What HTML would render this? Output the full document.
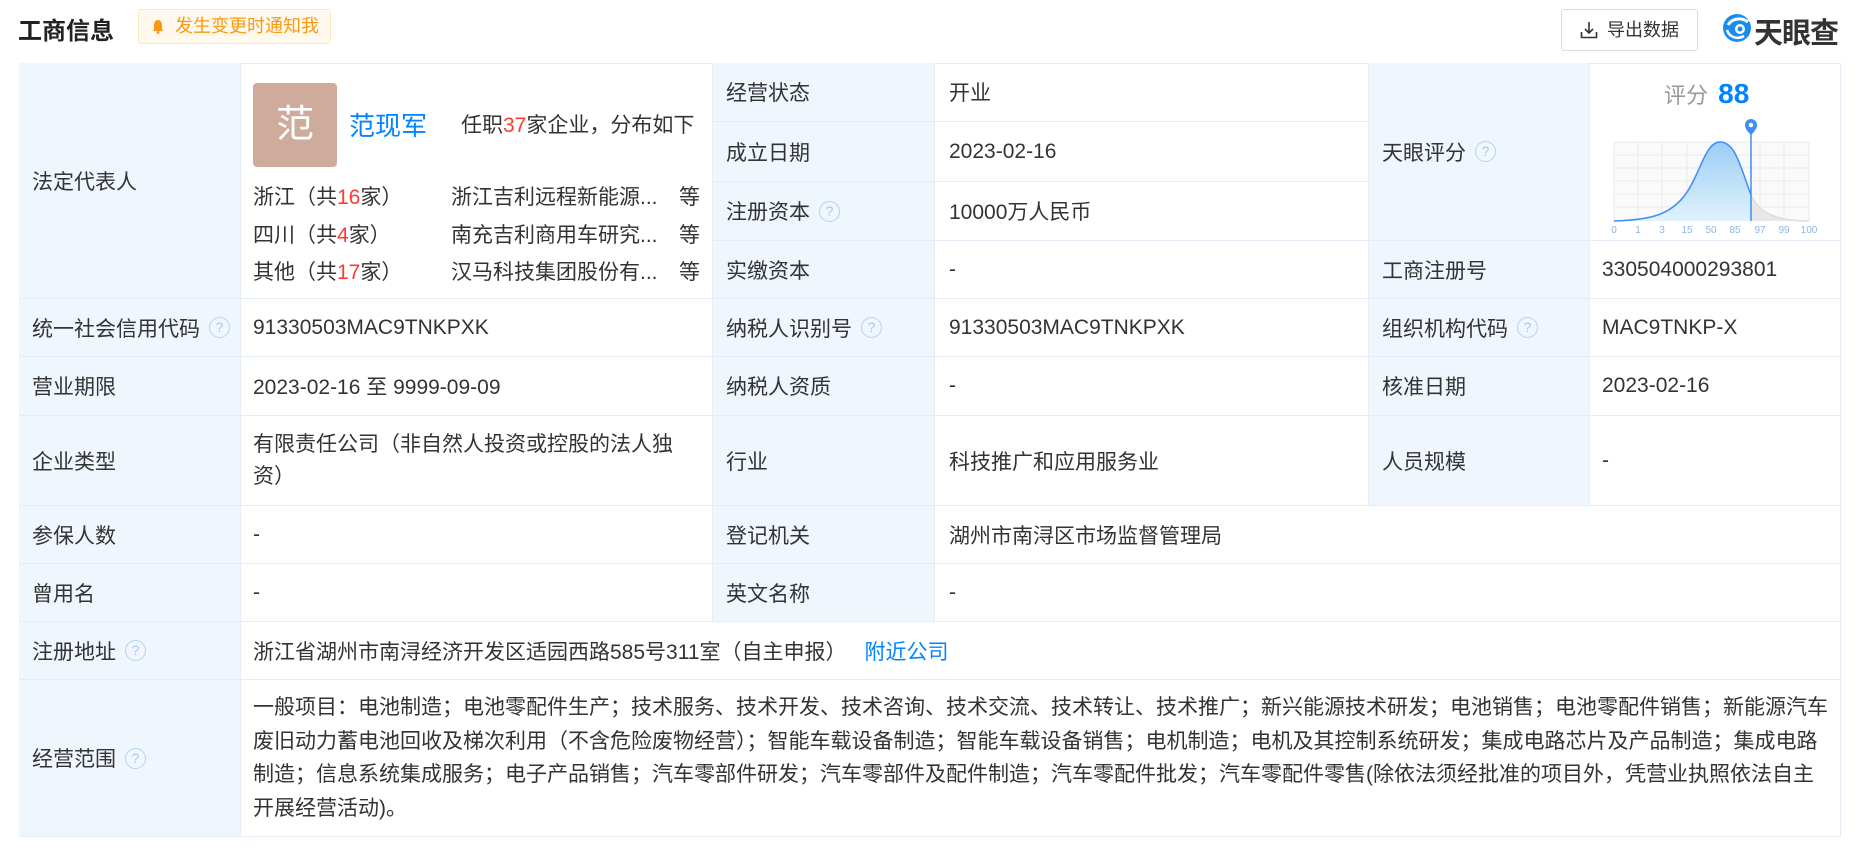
<!DOCTYPE html>
<html><head><meta charset="utf-8">
<style>
*{margin:0;padding:0;box-sizing:border-box}
body{width:1863px;height:847px;background:#fff;font-family:"Liberation Sans","Noto Sans CJK SC",sans-serif;color:#333;font-size:21px;position:relative;overflow:hidden}
.a{position:absolute;white-space:nowrap}
.c{position:absolute;display:flex;align-items:center;padding-left:13px;border-right:1px solid #e4ecf5;border-bottom:1px solid #e4ecf5}
.l{background:#eff6fd}
.q{display:inline-block;width:21px;height:21px;border:1.5px solid #b5d3ef;border-radius:50%;color:#a8c9ea;font-size:14px;line-height:18px;text-align:center;margin-left:9px}
.red{color:#ff3b30}
.blue{color:#0084ff}
</style></head><body>
<div class="a" style="left:18px;top:11px;font-size:24px;font-weight:bold;color:#222">工商信息</div>
<div class="a" style="left:138px;top:9px;width:193px;height:35px;background:#fff8ec;border:1px solid #fde7c4;border-radius:3px;color:#fa9a14;font-size:18px;line-height:33px;padding-left:36px">发生变更时通知我
<svg class="a" style="left:13px;top:9px" width="12" height="15" viewBox="0 0 12 15"><path d="M6 1C3 1 2 4 2 6v4L1 12h10l-1-2V6c0-2-1-5-4-5z" fill="#fa9a14"/><circle cx="6" cy="13.5" r="1.5" fill="#fa9a14"/></svg></div>
<div class="a" style="left:1561px;top:9px;width:137px;height:42px;border:1px solid #dcdcdc;border-radius:3px;font-size:18px;line-height:40px;padding-left:45px;color:#333">导出数据
<svg class="a" style="left:18px;top:11px" width="18" height="18" viewBox="0 0 18 18" fill="none" stroke="#333" stroke-width="1.6"><path d="M9 1v11M5 8l4 4 4-4M1.5 11v5.5h15V11"/></svg></div>
<svg class="a" style="left:1722px;top:13px" width="30" height="30" viewBox="0 0 30 30"><circle cx="15" cy="15" r="14" fill="#1a8cf0"/><path d="M26 9C20 4 10 5 6 12" stroke="#fff" stroke-width="3" fill="none"/><path d="M5 17c2 7 10 10 17 6" stroke="#fff" stroke-width="2.5" fill="none"/><circle cx="18" cy="16" r="5" fill="#fff"/><circle cx="18" cy="16" r="2.5" fill="#1a8cf0"/></svg>
<div class="a" style="left:1754px;top:10px;font-size:29px;font-weight:bold;color:#333;letter-spacing:-1px">天眼查</div>

<div class="a" style="left:19px;top:63px;width:1822px;height:774px;border:1px solid #e4ecf5;border-right:none;border-bottom:none"></div>
<!-- row1 -->
<div class="c l" style="left:19px;top:63px;width:222px;height:236px">法定代表人</div>
<div class="c" style="left:241px;top:63px;width:472px;height:236px"></div>
<div class="a" style="left:253px;top:83px;width:84px;height:84px;background:#cfab9b;border-radius:4px;color:#fff;font-size:38px;text-align:center;line-height:84px">范</div>
<div class="a blue" style="left:349px;top:106px;font-size:26px">范现军</div>
<div class="a" style="left:461px;top:109px">任职<span class="red">37</span>家企业，分布如下</div>
<div class="a" style="left:253px;top:181px">浙江（共<span class="red">16</span>家）</div>
<div class="a" style="left:451px;top:181px">浙江吉利远程新能源...</div>
<div class="a" style="left:679px;top:181px">等</div>
<div class="a" style="left:253px;top:219px">四川（共<span class="red">4</span>家）</div>
<div class="a" style="left:451px;top:219px">南充吉利商用车研究...</div>
<div class="a" style="left:679px;top:219px">等</div>
<div class="a" style="left:253px;top:256px">其他（共<span class="red">17</span>家）</div>
<div class="a" style="left:451px;top:256px">汉马科技集团股份有...</div>
<div class="a" style="left:679px;top:256px">等</div>

<div class="c l" style="left:713px;top:63px;width:222px;height:59px">经营状态</div>
<div class="c" style="left:935px;top:63px;width:434px;height:59px;padding-left:14px">开业</div>
<div class="c l" style="left:713px;top:122px;width:222px;height:60px">成立日期</div>
<div class="c" style="left:935px;top:122px;width:434px;height:60px;padding-left:14px">2023-02-16</div>
<div class="c l" style="left:713px;top:182px;width:222px;height:59px">注册资本<span class="q">?</span></div>
<div class="c" style="left:935px;top:182px;width:434px;height:59px;padding-left:14px">10000万人民币</div>
<div class="c l" style="left:713px;top:241px;width:222px;height:58px">实缴资本</div>
<div class="c" style="left:935px;top:241px;width:434px;height:58px;padding-left:14px">-</div>

<div class="c l" style="left:1369px;top:63px;width:221px;height:178px">天眼评分<span class="q">?</span></div>
<div class="c" style="left:1590px;top:63px;width:251px;height:178px"></div>
<div class="a" style="left:1664px;top:78px;font-size:22px;color:#999">评分 <b style="color:#0084ff;font-size:28px;margin-left:4px">88</b></div>
<svg class="a" style="left:1610px;top:115px" width="212" height="118" viewBox="0 0 212 118">
<defs><linearGradient id="g" x1="0" y1="0" x2="0" y2="1"><stop offset="0" stop-color="#9ccdf5"/><stop offset="1" stop-color="#e0f2fd"/></linearGradient></defs>
<rect x="4" y="27" width="195" height="79" fill="#fafafa"/>
<g stroke="#eaeaea" stroke-width="1">
<path d="M4 27h195M4 40h195M4 53h195M4 66h195M4 79h195M4 92h195M28 27v79M52 27v79M77 27v79M101 27v79M125 27v79M150 27v79M174 27v79M199 27v79M4 27v79"/></g>
<path d="M4 106C40 105 60 100 75 80S95 27 110 27S130 50 141 80L141 106Z" fill="url(#g)"/>
<path d="M141 80C150 100 170 106 199 106L141 106Z" fill="#e8e8e8"/>
<path d="M4 106C40 105 60 100 75 80S95 27 110 27S130 50 141 80" stroke="#3e8ef5" stroke-width="1.5" fill="none"/>
<path d="M141 80C150 100 170 106 199 106" stroke="#ddd" stroke-width="1.5" fill="none"/>
<line x1="141" y1="12" x2="141" y2="106" stroke="#3e8ef5" stroke-width="1.5"/>
<path d="M141 20C137 16 135 13 135 10A6 6 0 0 1 147 10C147 13 145 16 141 20Z" fill="#3e8ef5"/><circle cx="141" cy="10" r="2.3" fill="#fff"/>
<g fill="#8fb4e8" font-size="10" font-family="Liberation Sans" text-anchor="middle">
<text x="4" y="118">0</text><text x="28" y="118">1</text><text x="52" y="118">3</text><text x="77" y="118">15</text><text x="101" y="118">50</text><text x="125" y="118">85</text><text x="150" y="118">97</text><text x="174" y="118">99</text><text x="199" y="118">100</text></g>
</svg>
<div class="c l" style="left:1369px;top:241px;width:221px;height:58px">工商注册号</div>
<div class="c" style="left:1590px;top:241px;width:251px;height:58px;padding-left:12px">330504000293801</div>

<!-- row2 -->
<div class="c l" style="left:19px;top:299px;width:222px;height:58px">统一社会信用代码<span class="q">?</span></div>
<div class="c" style="left:241px;top:299px;width:472px;height:58px;padding-left:12px">91330503MAC9TNKPXK</div>
<div class="c l" style="left:713px;top:299px;width:222px;height:58px">纳税人识别号<span class="q">?</span></div>
<div class="c" style="left:935px;top:299px;width:434px;height:58px;padding-left:14px">91330503MAC9TNKPXK</div>
<div class="c l" style="left:1369px;top:299px;width:221px;height:58px">组织机构代码<span class="q">?</span></div>
<div class="c" style="left:1590px;top:299px;width:251px;height:58px;padding-left:12px">MAC9TNKP-X</div>
<!-- row3 -->
<div class="c l" style="left:19px;top:357px;width:222px;height:59px">营业期限</div>
<div class="c" style="left:241px;top:357px;width:472px;height:59px;padding-left:12px">2023-02-16 至 9999-09-09</div>
<div class="c l" style="left:713px;top:357px;width:222px;height:59px">纳税人资质</div>
<div class="c" style="left:935px;top:357px;width:434px;height:59px;padding-left:14px">-</div>
<div class="c l" style="left:1369px;top:357px;width:221px;height:59px">核准日期</div>
<div class="c" style="left:1590px;top:357px;width:251px;height:59px;padding-left:12px">2023-02-16</div>
<!-- row4 -->
<div class="c l" style="left:19px;top:416px;width:222px;height:90px">企业类型</div>
<div class="c" style="left:241px;top:416px;width:472px;height:90px;padding-left:12px;line-height:32px">有限责任公司（非自然人投资或控股的法人独<br>资）</div>
<div class="c l" style="left:713px;top:416px;width:222px;height:90px">行业</div>
<div class="c" style="left:935px;top:416px;width:434px;height:90px;padding-left:14px">科技推广和应用服务业</div>
<div class="c l" style="left:1369px;top:416px;width:221px;height:90px">人员规模</div>
<div class="c" style="left:1590px;top:416px;width:251px;height:90px;padding-left:12px">-</div>
<!-- row5 -->
<div class="c l" style="left:19px;top:506px;width:222px;height:58px">参保人数</div>
<div class="c" style="left:241px;top:506px;width:472px;height:58px;padding-left:12px">-</div>
<div class="c l" style="left:713px;top:506px;width:222px;height:58px">登记机关</div>
<div class="c" style="left:935px;top:506px;width:906px;height:58px;padding-left:14px">湖州市南浔区市场监督管理局</div>
<!-- row6 -->
<div class="c l" style="left:19px;top:564px;width:222px;height:58px">曾用名</div>
<div class="c" style="left:241px;top:564px;width:472px;height:58px;padding-left:12px">-</div>
<div class="c l" style="left:713px;top:564px;width:222px;height:58px">英文名称</div>
<div class="c" style="left:935px;top:564px;width:906px;height:58px;padding-left:14px">-</div>
<!-- row7 -->
<div class="c l" style="left:19px;top:622px;width:222px;height:58px">注册地址<span class="q">?</span></div>
<div class="c" style="left:241px;top:622px;width:1600px;height:58px;padding-left:12px">浙江省湖州市南浔经济开发区适园西路585号311室（自主申报）<span class="blue" style="margin-left:18px">附近公司</span></div>
<!-- row8 -->
<div class="c l" style="left:19px;top:680px;width:222px;height:157px">经营范围<span class="q">?</span></div>
<div class="c" style="left:241px;top:680px;width:1600px;height:157px;padding-left:12px;padding-right:10px;line-height:33.5px">一般项目：电池制造；电池零配件生产；技术服务、技术开发、技术咨询、技术交流、技术转让、技术推广；新兴能源技术研发；电池销售；电池零配件销售；新能源汽车废旧动力蓄电池回收及梯次利用（不含危险废物经营）；智能车载设备制造；智能车载设备销售；电机制造；电机及其控制系统研发；集成电路芯片及产品制造；集成电路制造；信息系统集成服务；电子产品销售；汽车零部件研发；汽车零部件及配件制造；汽车零配件批发；汽车零配件零售(除依法须经批准的项目外，凭营业执照依法自主开展经营活动)。</div>
</body></html>
